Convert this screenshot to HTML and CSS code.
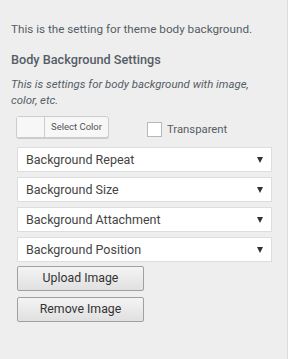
FILE: index.html
```html
<!DOCTYPE html>
<html lang="en">

<head>
	<meta charset="UTF-8">
	<meta name="viewport" content="width=device-width, initial-scale=1.0">
	<title>Body Background</title>
	<link rel="stylesheet" href="styles.css">
</head>

<body>
	<div class="panel">
		<p class="intro">This is the setting for theme body background.</p>
		<h3 class="title">Body Background Settings</h3>
		<p class="desc">This is settings for body background with image, color, etc.</p>

		<div class="color-row">
			<div class="color-btn">
				<span class="swatch"></span>
				<span class="color-label">Select Color</span>
			</div>
			<label class="check">
				<span class="box"></span>
				Transparent
			</label>
		</div>

		<div class="selects">
			<div class="select">Background Repeat <span class="arrow"></span></div>
			<div class="select">Background Size <span class="arrow"></span></div>
			<div class="select">Background Attachment <span class="arrow"></span></div>
			<div class="select">Background Position <span class="arrow"></span></div>
		</div>

		<div class="buttons">
			<div class="btn">Upload Image</div>
			<div class="btn">Remove Image</div>
		</div>
	</div>
</body>

</html>
```

FILE: styles.css
```css
:root {
	--bg: #eeeeee;
	--text: #555d66;
	--line: #dddddd;
}

* {
	box-sizing: border-box;
}

body {
	padding: 0;
	margin: 0;
	font-family: 'Roboto', sans-serif;
	background: var(--bg);
	color: var(--text);
}

.panel {
	height: 100vh;
	padding: 20px 0 0 11px;
	border-right: 1px solid var(--line);
}

.intro {
	margin: 0;
	font-size: 11.7px;
	line-height: 18px;
}

.title {
	margin: 12px 0 0;
	font-size: 12.7px;
	font-weight: 500;
	line-height: 20px;
}

.desc {
	margin: 6px 0 0;
	font-size: 11.4px;
	font-style: italic;
	line-height: 16px;
	padding-right: 10px;
}

.color-row {
	display: flex;
	align-items: center;
	margin: 8px 0 0 5px;
}

.color-btn {
	display: flex;
	width: 93px;
	height: 22px;
	border: 1px solid #cccccc;
	border-radius: 3px;
	background: #f7f7f7;
	box-shadow: 0 1px 0 #cccccc;
}

.swatch {
	width: 28px;
	border-right: 1px solid #cccccc;
	background: #f7f7f7;
}

.color-label {
	flex: 1;
	font-size: 9.5px;
	line-height: 20px;
	text-align: center;
	color: #555555;
}

.check {
	display: flex;
	align-items: center;
	margin-left: 38px;
	margin-top: 5px;
	font-size: 11.3px;
}

.box {
	width: 15px;
	height: 15px;
	margin-right: 5px;
	background: white;
	border: 1px solid #b4b9be;
}

.selects {
	display: flex;
	flex-direction: column;
	gap: 5px;
	margin: 9px 0 0 6px;
	width: 255px;
}

.select {
	display: flex;
	align-items: center;
	justify-content: space-between;
	height: 25px;
	padding: 0 8px 0 8px;
	background: white;
	border: 1px solid var(--line);
	font-size: 12.5px;
	color: #444444;
}

.arrow {
	width: 0;
	height: 0;
	border-left: 3.5px solid transparent;
	border-right: 3.5px solid transparent;
	border-top: 6px solid #333333;
}

.buttons {
	display: flex;
	flex-direction: column;
	gap: 6px;
	margin: 4px 0 0 6px;
}

.btn {
	width: 127px;
	height: 25px;
	line-height: 23px;
	text-align: center;
	font-size: 12.3px;
	color: #333333;
	border: 1px solid #a0a0a0;
	border-radius: 2px;
	background: linear-gradient(#f4f4f4, #e0e0e0);
}
```
